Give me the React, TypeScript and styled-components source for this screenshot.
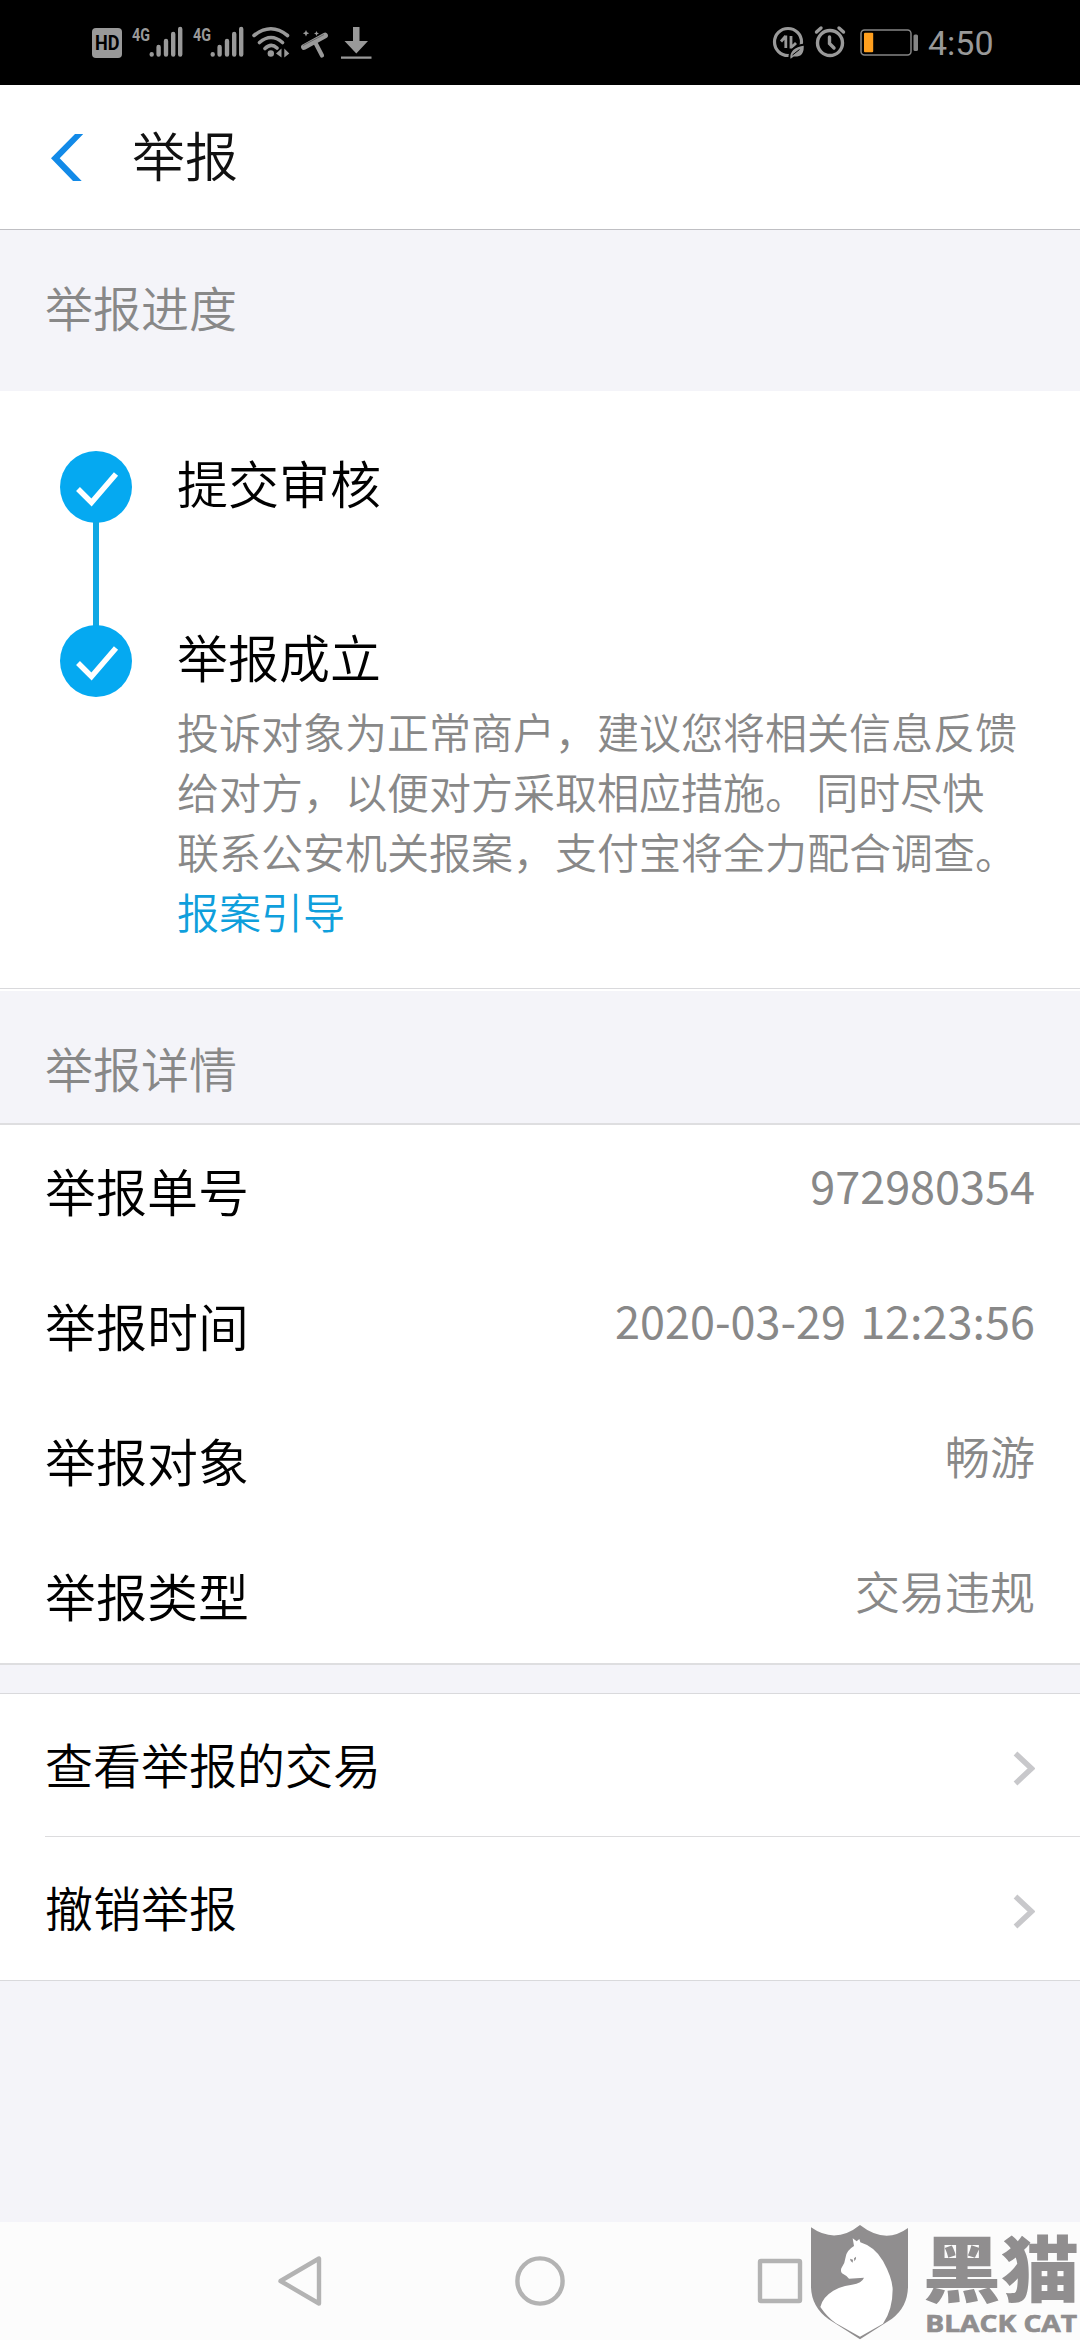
import React from "react";
import styled, { createGlobalStyle } from "styled-components";

const GlobalStyle = createGlobalStyle`
  * {
    box-sizing: border-box;
  }
  body {
    margin: 0;
    background: #f4f4f9;
    font-family: "Noto Sans CJK SC", sans-serif;
    font-weight: 350;
  }
`;

const Screen = styled.div`
  position: relative;
  display: flex;
  flex-direction: column;
  width: 1080px;
  height: 2340px;
  overflow: hidden;
  background: #f4f4f9;
`;

const StatusBar = styled.div`
  display: flex;
  justify-content: space-between;
  height: 85px;
  flex: none;
  padding: 0 87px 0 80px;
  background: #000;
`;

const StatusIcons = styled.svg`
  display: block;
  flex: none;
  height: 85px;
  fill: #999;
  font-family: Roboto, sans-serif;
`;

const StatusRight = styled.div`
  display: flex;
  color: #999;
`;

const Clock = styled.span`
  width: 65px;
  white-space: nowrap;
  font: 400 34px/86px Roboto, sans-serif;
`;

const Header = styled.header`
  display: flex;
  align-items: center;
  height: 145px;
  flex: none;
  padding-left: 51px;
  gap: 49px;
  background: #fff;
  border-bottom: 1px solid #bfbfc3;
`;

const Title = styled.h1`
  margin: 0;
  padding-bottom: 6px;
  font-size: 53px;
  font-weight: 350;
  line-height: 80px;
  color: #111;
`;

const SectionTitle = styled.h2<{ $height: number }>`
  flex: none;
  height: ${(p) => p.$height}px;
  margin: 0;
  padding: 46px 45px 0;
  font-size: 48px;
  font-weight: 350;
  line-height: 60px;
  color: #888;
`;

const Steps = styled.section`
  flex: none;
  height: 598px;
  margin-bottom: 2px;
  padding: 60px 50px 0 60px;
  background: #fff;
  border-bottom: 1px solid #d9d9dc;
  box-shadow: 0 2px 0 #fff;
`;

const Step = styled.div<{ $last?: boolean }>`
  display: flex;
  gap: 45px;
  min-height: ${(p) => (p.$last ? 0 : 174)}px;
`;

const Rail = styled.div`
  display: flex;
  flex-direction: column;
  align-items: center;
  width: 72px;
  flex: none;

  svg {
    flex: none;
  }
`;

const RailLine = styled.div`
  flex: 1;
  width: 6px;
  margin: -1px 0;
  background: #10a8e4;
`;

const StepTitle = styled.div`
  font-size: 51px;
  line-height: 62px;
  color: #000;
`;

const StepText = styled.p`
  width: 845px;
  margin: 14px 0 0;
  font-size: 42px;
  line-height: 60px;
  color: #888;
`;

const Link = styled.a`
  display: block;
  color: #0f9fdc;
`;

const Details = styled.section`
  flex: none;
  background: #fff;
  border-top: 2px solid #dedee0;
  border-bottom: 2px solid #dedee0;
`;

const DetailRow = styled.div`
  display: flex;
  justify-content: space-between;
  height: 135px;
  padding: 0 45px;

  &:last-child {
    height: 133px;
  }
`;

const Label = styled.span`
  font-size: 51px;
  line-height: 130px;
  color: #000;
`;

const Value = styled.span<{ $numeric?: boolean }>`
  font-size: 45px;
  font-weight: ${(p) => (p.$numeric ? 400 : 350)};
  line-height: ${(p) => (p.$numeric ? 119 : 121)}px;
  word-spacing: 4px;
  color: #888;
`;

const Actions = styled.section`
  flex: none;
  margin-top: 28px;
  padding-left: 45px;
  background: #fff;
  border-top: 1px solid #d9d9dc;
  border-bottom: 1px solid #d9d9dc;
`;

const Action = styled.div`
  display: flex;
  justify-content: space-between;
  height: 142px;
  padding-right: 45px;
  font-size: 48px;
  line-height: 139px;
  color: #000;

  & + & {
    height: 144px;
    border-top: 1px solid #dcdcde;
  }

  svg {
    margin-top: 57px;
  }
`;

const NavBar = styled.nav`
  display: flex;
  height: 118px;
  flex: none;
  margin-top: auto;
  padding: 0 180px;
  background: #fcfcfc;
`;

const NavButton = styled.div`
  display: flex;
  flex: 1;
  align-items: center;
  justify-content: center;

  svg {
    fill: none;
    stroke: #b3b3b3;
    stroke-width: 4.4;
    stroke-linejoin: round;
  }
`;

const Watermark = styled.svg`
  position: absolute;
  right: 0;
  bottom: 0;
  overflow: visible;
  fill: #908e8f;
`;

const details = [
  { label: "举报单号", value: "972980354", numeric: true },
  { label: "举报时间", value: "2020-03-29 12:23:56", numeric: true },
  { label: "举报对象", value: "畅游" },
  { label: "举报类型", value: "交易违规" },
];

const actions = ["查看举报的交易", "撤销举报"];

const Signal = ({ x }: { x: number }) => (
  <g transform={`translate(${x} 0)`}>
    <text x="0" y="41" fontSize="18.5" fontWeight="700" textLength="18" lengthAdjust="spacingAndGlyphs">
      4G
    </text>
    <g stroke="#999" strokeWidth="4.4" strokeLinecap="round">
      <path d="M19.7 54.3v.2M26.6 47v7.5M34 41v13.5M41.2 34v20.5M48.2 29v25.5" />
    </g>
  </g>
);

const LeftStatus = () => (
  <StatusIcons width="300" viewBox="80 0 300 85">
    <rect x="92" y="28" width="30" height="30" rx="4" />
    <text x="95" y="50" fontSize="19.5" fontWeight="700" fill="#000" textLength="24.5" lengthAdjust="spacingAndGlyphs">
      HD
    </text>
    <Signal x={132} />
    <Signal x={193} />
    {/* wifi */}
    <g fill="none" stroke="#999" strokeWidth="3.6" strokeLinecap="round">
      <path d="M254 35.5Q271 22 287.5 35.5M259.5 42.5Q271 32.5 282.5 42.5M265 48.5Q271 42.5 277 48" />
    </g>
    <circle cx="270.8" cy="53.5" r="3.2" />
    <path d="M276 53.5l5.5-5v9zM289.3 53.5l-5-5v9z" />
    {/* cleaner */}
    <path d="M304 47L325 35.5" stroke="#999" strokeWidth="5.8" strokeLinecap="round" />
    <path d="M303 45.5L324 34.5" stroke="#666" strokeWidth="1" />
    <path d="M315.5 43L322 55.5" stroke="#999" strokeWidth="4.2" strokeLinecap="round" />
    <path d="M306 30l1 2.200 2.200 1-2.200 1-1 2.200-1-2.200-2.200-1 2.200-1zM316.500 31l.8 1.700 1.700.8-1.700.8-.8 1.700-.8-1.700-1.700-.8 1.700-.8z" />
    {/* download */}
    <path d="M353 27h6.5v14h8.5L356.3 53.5 344.5 41H353zM341 56.5h30.5v2.2H341z" />
  </StatusIcons>
);

const RightStatus = () => (
  <StatusIcons width="175" viewBox="753 0 175 85">
    {/* data saver */}
    <circle cx="788" cy="42" r="13.5" fill="none" stroke="#999" strokeWidth="3.2" />
    <path d="M785.8 35.5v12.5M785.8 36L781 41.5M791 36v12.5M791 48L796 43" fill="none" stroke="#999" strokeWidth="2.8" />
    <path d="M789.5 59Q788 47 804.5 44.5Q806 58 794 57.5L790.5 60z" stroke="#000" strokeWidth="1.8" />
    <path d="M792.5 55L799.5 49.5" stroke="#000" strokeWidth="1" />
    {/* alarm */}
    <g fill="none" stroke="#999" strokeWidth="3.4" strokeLinecap="round">
      <circle cx="830" cy="43" r="12.5" />
      <path d="M816.5 32l4.5-4M843.5 32l-4.5-4M829.5 37v6.5l4.5 4.5" />
    </g>
    {/* battery */}
    <rect x="861" y="30" width="50" height="25" rx="3.5" fill="none" stroke="#858585" strokeWidth="1.5" />
    <rect x="864" y="32.8" width="9.2" height="19.5" rx="1" fill="#ff9f1e" />
    <rect x="913.5" y="34.5" width="4.5" height="16.5" rx="1.5" fill="#858585" />
  </StatusIcons>
);

const CheckIcon = () => (
  <svg width="72" height="72" viewBox="0 0 72 72">
    <circle cx="36" cy="36" r="36" fill="#05a9f1" />
    <path d="M18 38L31.5 51.5L56 23" fill="none" stroke="#fff" strokeWidth="5.5" />
  </svg>
);

const Chevron = () => (
  <svg width="22" height="35" viewBox="0 0 22 35">
    <path d="M2.5 2.5L18.5 17.5L2.5 32.5" fill="none" stroke="#c8c8cb" strokeWidth="5.4" />
  </svg>
);

const BlackCat = () => (
  <Watermark width="270" height="116" viewBox="90 72 810 348">
    <path d="M93 82Q167 134 240 75Q316 134 384 84V262Q382 322 336 356L240 418L146 358Q95 322 93 262Z" />
    <path
      fill="#fff"
      d="M218 115L230 124L238 117L241 127Q284 140 309 183Q337 234 338 268Q338 330 309 371L240 410L168 370Q142 352 121 321Q127 292 160 272Q184 258 216 254Q246 249 252 233L207 236Q198 226 186 220Q181 214 184 205Q195 190 197 171Q200 151 222 138Z"
    />
    <path d="M210 176l9 3-1 9q-7-2-8-12zM222 175l6-5q2 8-5 14z" />
    <text
      x="428"
      y="288"
      fontSize="214"
      fontWeight="900"
      textLength="470"
      lengthAdjust="spacingAndGlyphs"
      fontFamily="'Noto Sans CJK SC', sans-serif"
    >
      黑猫
    </text>
    <text
      x="436"
      y="397"
      fontSize="68"
      fontWeight="700"
      textLength="455"
      lengthAdjust="spacingAndGlyphs"
      fontFamily="'Open Sans', sans-serif"
      stroke="#908e8f"
      strokeWidth="2"
    >
      BLACK CAT
    </text>
  </Watermark>
);

const App = () => {
  return (
    <Screen>
      <GlobalStyle />
      <StatusBar>
        <LeftStatus />
        <StatusRight>
          <RightStatus />
          <Clock>4:50</Clock>
        </StatusRight>
      </StatusBar>

      <Header>
        <svg width="32" height="47" viewBox="0 0 32 47">
          <path d="M24 0H32.3L8.7 24.3L30.7 47H22L0 24.3Z" fill="#128ae8" />
        </svg>
        <Title>举报</Title>
      </Header>

      <SectionTitle $height={161}>举报进度</SectionTitle>
      <Steps>
        <Step>
          <Rail>
            <CheckIcon />
            <RailLine />
          </Rail>
          <StepTitle>提交审核</StepTitle>
        </Step>
        <Step $last>
          <Rail>
            <CheckIcon />
          </Rail>
          <div>
            <StepTitle>举报成立</StepTitle>
            <StepText>
              投诉对象为正常商户，建议您将相关信息反馈给对方，以便对方采取相应措施。 同时尽快联系公安机关报案，支付宝将全力配合调查。
              <Link>报案引导</Link>
            </StepText>
          </div>
        </Step>
      </Steps>

      <SectionTitle $height={132}>举报详情</SectionTitle>
      <Details>
        {details.map((item) => (
          <DetailRow key={item.label}>
            <Label>{item.label}</Label>
            <Value $numeric={item.numeric}>{item.value}</Value>
          </DetailRow>
        ))}
      </Details>

      <Actions>
        {actions.map((text) => (
          <Action key={text}>
            {text}
            <Chevron />
          </Action>
        ))}
      </Actions>

      <NavBar>
        <NavButton>
          <svg width="46" height="54" viewBox="0 0 46 54">
            <path d="M3.5 27L42 4.500V49.500Z" />
          </svg>
        </NavButton>
        <NavButton>
          <svg width="54" height="54" viewBox="0 0 54 54">
            <circle cx="27" cy="27" r="22.6" />
          </svg>
        </NavButton>
        <NavButton>
          <svg width="46" height="46" viewBox="0 0 46 46">
            <rect x="3" y="3" width="40" height="40" rx="1" />
          </svg>
        </NavButton>
      </NavBar>
      <BlackCat />
    </Screen>
  );
};

export default App;
